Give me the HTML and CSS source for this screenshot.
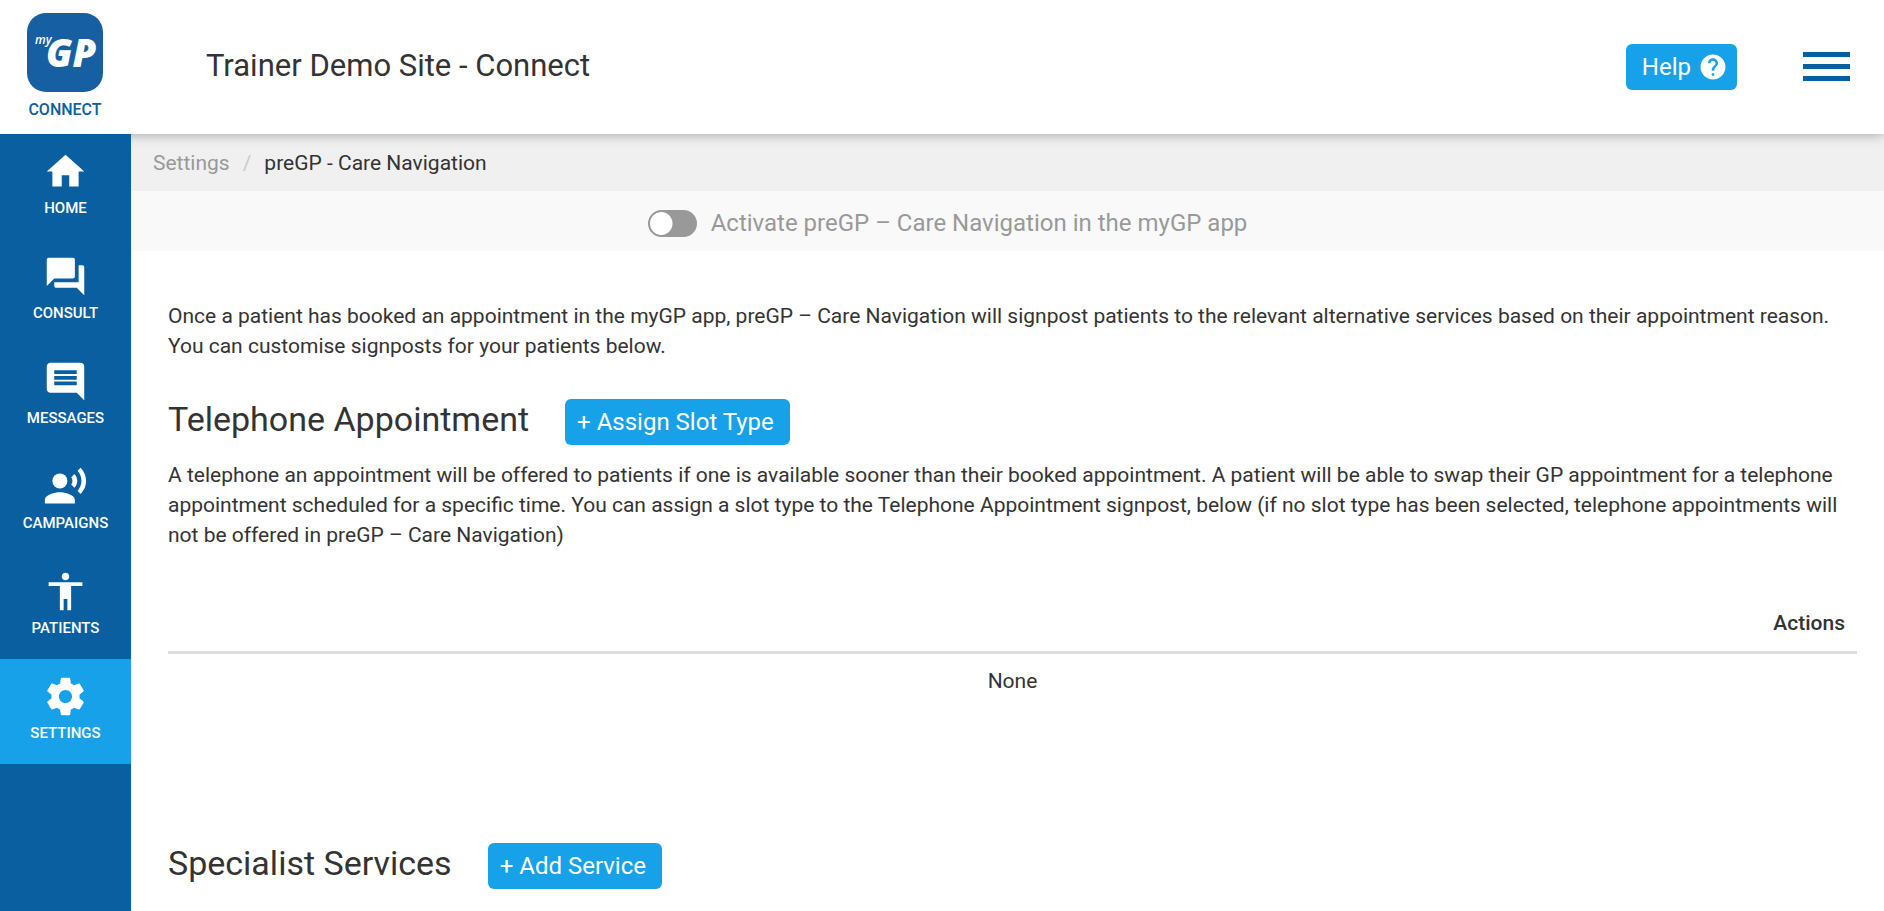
FILE: index.html
```html
<!DOCTYPE html>
<html lang="en">
<head>
    <meta charset="UTF-8">
    <meta name="viewport" content="width=device-width, initial-scale=1.0">
    <title>preGP - Care Navigation</title>
    <link rel="stylesheet" href="styles.css">
</head>
<body>

    <!-- Top bar -->
    <header class="topbar">
        <a href="#" class="logo" aria-label="myGP Connect">
            <svg class="logo-mark" viewBox="0 0 76 79" aria-hidden="true">
                <rect width="76" height="79" rx="19" fill="#175fa3"/>
                <text x="8" y="31" class="logo-my">my<tspan x="19" y="54" class="logo-gp">GP</tspan></text>
            </svg>
            <span class="logo-name">CONNECT</span>
        </a>
        <h1>Trainer Demo Site - Connect</h1>
        <button type="button" class="btn btn-help">Help
            <svg viewBox="0 0 24 24" aria-hidden="true"><path d="M12 2C6.48 2 2 6.48 2 12s4.48 10 10 10 10-4.48 10-10S17.52 2 12 2zm1 17h-2v-2h2v2zm2.07-7.75l-.9.92C13.45 12.9 13 13.5 13 15h-2v-.5c0-1.1.45-2.1 1.17-2.83l1.24-1.26c.37-.36.59-.86.59-1.41 0-1.1-.9-2-2-2s-2 .9-2 2H8c0-2.21 1.79-4 4-4s4 1.79 4 4c0 .88-.36 1.68-.93 2.25z"/></svg>
        </button>
        <button type="button" class="menu-toggle" aria-label="Menu">
            <svg viewBox="0 0 47 29" aria-hidden="true"><path d="M0 0h47v5H0zM0 12h47v5H0zM0 24h47v5H0z"/></svg>
        </button>
    </header>

    <div class="layout">
        <!-- Side menu -->
        <nav class="sidebar">
            <a href="#">
                <svg viewBox="0 0 24 24" aria-hidden="true"><path d="M10 20v-6h4v6h5v-8h3L12 3 2 12h3v8z"/></svg>
                HOME
            </a>
            <a href="#">
                <svg viewBox="0 0 24 24" aria-hidden="true"><path d="M21 6h-2v9H6v2c0 .55.45 1 1 1h11l4 4V7c0-.55-.45-1-1-1zm-4 6V3c0-.55-.45-1-1-1H3c-.55 0-1 .45-1 1v14l4-4h10c.55 0 1-.45 1-1z"/></svg>
                CONSULT
            </a>
            <a href="#">
                <svg viewBox="0 0 24 24" aria-hidden="true"><path d="M21.99 4c0-1.1-.89-2-1.99-2H4c-1.1 0-2 .9-2 2v12c0 1.1.9 2 2 2h14l4 4-.01-18zM18 14H6v-2h12v2zm0-3H6V9h12v2zm0-3H6V6h12v2z"/></svg>
                MESSAGES
            </a>
            <a href="#">
                <svg viewBox="0 0 24 24" aria-hidden="true"><circle cx="9" cy="9" r="4"/><path d="M9 15c-2.67 0-8 1.34-8 4v2h16v-2c0-2.66-5.33-4-8-4zm7.76-9.64l-1.68 1.69c.84 1.18.84 2.71 0 3.89l1.68 1.69c2.02-2.02 2.02-5.07 0-7.27zM20.07 2l-1.63 1.63c2.77 3.02 2.77 7.56 0 10.74L20.07 16c3.9-3.89 3.91-9.95 0-14z"/></svg>
                CAMPAIGNS
            </a>
            <a href="#">
                <svg viewBox="0 0 24 24" aria-hidden="true"><path d="M12 2c1.1 0 2 .9 2 2s-.9 2-2 2-2-.9-2-2 .9-2 2-2zm9 7h-6v13h-2v-6h-2v6H9V9H3V7h18v2z"/></svg>
                PATIENTS
            </a>
            <a href="#" class="active">
                <svg viewBox="0 0 24 24" aria-hidden="true"><path d="M19.43 12.98c.04-.32.07-.64.07-.98s-.03-.66-.07-.98l2.11-1.65c.19-.15.24-.42.12-.64l-2-3.46c-.12-.22-.39-.3-.61-.22l-2.49 1c-.52-.4-1.08-.73-1.69-.98l-.38-2.65C14.46 2.18 14.25 2 14 2h-4c-.25 0-.46.18-.49.42l-.38 2.65c-.61.25-1.17.59-1.69.98l-2.49-1c-.23-.09-.49 0-.61.22l-2 3.46c-.13.22-.07.49.12.64l2.11 1.65c-.04.32-.07.65-.07.98s.03.66.07.98l-2.11 1.65c-.19.15-.24.42-.12.64l2 3.46c.12.22.39.3.61.22l2.49-1c.52.4 1.08.73 1.69.98l.38 2.65c.03.24.24.42.49.42h4c.25 0 .46-.18.49-.42l.38-2.65c.61-.25 1.17-.59 1.69-.98l2.49 1c.23.09.49 0 .61-.22l2-3.46c.12-.22.07-.49-.12-.64l-2.11-1.65zM12 15.5c-1.93 0-3.5-1.57-3.5-3.5s1.57-3.5 3.5-3.5 3.5 1.57 3.5 3.5-1.57 3.5-3.5 3.5z"/></svg>
                SETTINGS
            </a>
        </nav>

        <main>
            <nav class="breadcrumb">
                <a href="#">Settings</a>
                <span class="separator">/</span>
                <span>preGP - Care Navigation</span>
            </nav>

            <div class="activate">
                <input type="checkbox" id="activate" class="switch">
                <label for="activate">Activate preGP – Care Navigation in the myGP app</label>
            </div>

            <div class="content">
                <p>Once a patient has booked an appointment in the myGP app, preGP – Care Navigation will signpost patients to the relevant alternative services based on their appointment reason. You can customise signposts for your patients below.</p>

                <section>
                    <div class="section-title">
                        <h2>Telephone Appointment</h2>
                        <button type="button" class="btn">+ Assign Slot Type</button>
                    </div>
                    <p>A telephone an appointment will be offered to patients if one is available sooner than their booked appointment. A patient will be able to swap their GP appointment for a telephone appointment scheduled for a specific time. You can assign a slot type to the Telephone Appointment signpost, below (if no slot type has been selected, telephone appointments will not be offered in preGP – Care Navigation)</p>
                    <table>
                        <thead>
                            <tr><th>Actions</th></tr>
                        </thead>
                        <tbody>
                            <tr><td>None</td></tr>
                        </tbody>
                    </table>
                </section>

                <section>
                    <div class="section-title">
                        <h2>Specialist Services</h2>
                        <button type="button" class="btn">+ Add Service</button>
                    </div>
                </section>
            </div>
        </main>
    </div>

</body>
</html>
```
FILE: styles.css
```css
* {
    box-sizing: border-box;
}
body {
    margin: 0;
    font-family: Roboto, sans-serif;
    font-size: 21px;
    line-height: 30px;
    color: #333;
    background-color: #fff;
}
h1, h2, p {
    margin: 0;
    font-weight: normal;
}
a {
    text-decoration: none;
}

/* Top bar */
.topbar {
    position: relative;
    z-index: 1;
    display: flex;
    align-items: center;
    height: 134px;
    padding: 0 34px 2px 0;
    background-color: #fff;
    box-shadow: 0 0 12px rgba(0, 0, 0, 0.35);
}
.logo {
    display: flex;
    flex-direction: column;
    align-items: center;
    width: 130px;
    color: #0a5fa0;
}
.logo-mark {
    width: 76px;
    height: 79px;
}
.logo-my, .logo-gp {
    fill: #fff;
    font-family: "Open Sans", sans-serif;
    font-style: italic;
}
.logo-my {
    font-size: 12px;
    font-weight: 600;
}
.logo-gp {
    font-size: 38px;
    font-weight: 800;
}
.logo-name {
    margin-top: 9px;
    font-size: 16px;
    line-height: 18px;
    font-weight: 500;
}
h1 {
    flex: 1;
    padding-left: 76px;
    font-size: 31px;
    line-height: 40px;
}
.btn {
    height: 46px;
    padding: 0 16px 0 12px;
    border: 0;
    border-radius: 6px;
    background-color: #17a1e9;
    color: #fff;
    font-family: inherit;
    font-size: 24px;
    line-height: 30px;
    cursor: pointer;
}
.btn-help {
    display: flex;
    align-items: center;
    gap: 7px;
    margin-top: 2px;
    padding: 0 9px 0 16px;
}
.btn-help svg {
    width: 30px;
    height: 30px;
    fill: #fff;
}
.menu-toggle {
    margin-left: 66px;
    padding: 0;
    border: 0;
    background: none;
    cursor: pointer;
}
.menu-toggle svg {
    display: block;
    width: 47px;
    height: 29px;
    fill: #0a5fa0;
}

.layout {
    display: flex;
    min-height: calc(100vh - 134px);
}

/* Side menu */
.sidebar {
    position: relative;
    z-index: 2;
    flex: none;
    width: 131px;
    background-color: #0a5fa0;
}
.sidebar a {
    display: flex;
    flex-direction: column;
    align-items: center;
    height: 105px;
    padding-top: 15px;
    color: #fff;
    font-size: 15px;
    line-height: 28px;
    font-weight: 500;
}
.sidebar a.active {
    background-color: #17a1e9;
}
.sidebar svg {
    width: 45px;
    height: 45px;
    fill: #fff;
}

main {
    flex: 1;
    min-width: 0;
}
.breadcrumb {
    display: flex;
    gap: 13px;
    padding: 14px 22px 13px;
    background-color: #f0f0f0;
}
.breadcrumb a {
    color: #999;
}
.separator {
    color: #ccc;
}
.activate {
    display: flex;
    justify-content: center;
    align-items: center;
    gap: 14px;
    height: 60px;
    padding: 4px 120px 0 0;
    background-color: #f9f9f9;
    color: #999;
    font-size: 24px;
}
.switch {
    appearance: none;
    width: 49px;
    height: 27px;
    margin: 0;
    border: 2px solid #999;
    border-radius: 14px;
    background: radial-gradient(circle at 11px 50%, #fff 11px, transparent 12px) #999;
}
.switch:checked {
    background: radial-gradient(circle at 34px 50%, #fff 11px, transparent 12px) #17a1e9;
}

.content {
    padding: 50px 27px 20px 37px;
}
.section-title {
    display: flex;
    gap: 36px;
    padding: 38px 0 15px;
}
h2 {
    font-size: 34px;
    line-height: 40px;
}
table {
    width: 100%;
    margin: 48px 0 97px;
    border-collapse: collapse;
}
th {
    padding: 10px 12px 13px;
    border-bottom: 3px solid #ddd;
    text-align: right;
    font-weight: 500;
}
td {
    padding: 12px;
    text-align: center;
}
```
